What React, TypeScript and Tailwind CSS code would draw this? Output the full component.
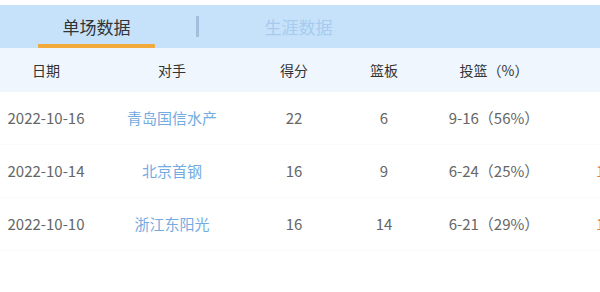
const rows = [
  { date: "2022-10-16", team: "青岛国信水产", pts: "22", reb: "6", fg: "9-16（56%）", extra: "" },
  { date: "2022-10-14", team: "北京首钢", pts: "16", reb: "9", fg: "6-24（25%）", extra: "16" },
  { date: "2022-10-10", team: "浙江东阳光", pts: "16", reb: "14", fg: "6-21（29%）", extra: "16" },
];

const cols = ["w-[92px]", "w-[160px]", "w-[84px]", "w-[96px]", "w-[124px]", "w-[100px]"];

function App() {
  return (
    <div
      className="w-[600px] h-[292px] bg-white overflow-hidden pt-[5px]"
      style={{ fontFamily: '"Noto Sans CJK SC", "Noto Sans", sans-serif' }}
    >
      <div className="h-[43px] bg-[#c6e2fb] flex items-end pl-[38px]">
        <div className="w-[117px] h-full flex flex-col items-center justify-end">
          <span className="text-[17px] text-[#333] leading-none mb-[9px]">单场数据</span>
          <div className="w-full h-[4px] bg-[#f2a93b] rounded-[1px]"></div>
        </div>
        <div className="mx-[41px] w-[3px] h-[21px] bg-[#9fbfdc] self-center"></div>
        <div className="w-[117px] h-full flex flex-col items-center justify-end">
          <span className="text-[17px] text-[#a7cbee] leading-none mb-[13px]">生涯数据</span>
        </div>
      </div>

      <div className="flex h-[44px] items-center bg-[#eff6fd] text-[14px] text-[#333] whitespace-nowrap">
        <div className={`${cols[0]} shrink-0 text-center`}>日期</div>
        <div className={`${cols[1]} shrink-0 text-center`}>对手</div>
        <div className={`${cols[2]} shrink-0 text-center`}>得分</div>
        <div className={`${cols[3]} shrink-0 text-center`}>篮板</div>
        <div className={`${cols[4]} shrink-0 text-center`}>投篮（%）</div>
        <div className={`${cols[5]} shrink-0 text-center`}></div>
      </div>

      {rows.map((r) => (
        <div
          key={r.date}
          className="flex h-[53px] items-center text-[15px] text-[#666] whitespace-nowrap border-b border-[#fafafa]"
        >
          <div className={`${cols[0]} shrink-0 text-center`}>{r.date}</div>
          <div className={`${cols[1]} shrink-0 text-center text-[#74abe0]`}>{r.team}</div>
          <div className={`${cols[2]} shrink-0 text-center`}>{r.pts}</div>
          <div className={`${cols[3]} shrink-0 text-center`}>{r.reb}</div>
          <div className={`${cols[4]} shrink-0 text-center`}>{r.fg}</div>
          <div className={`${cols[5]} shrink-0 pl-[40px] text-[#d9823a]`}>{r.extra}</div>
        </div>
      ))}
    </div>
  );
}

export default App;
